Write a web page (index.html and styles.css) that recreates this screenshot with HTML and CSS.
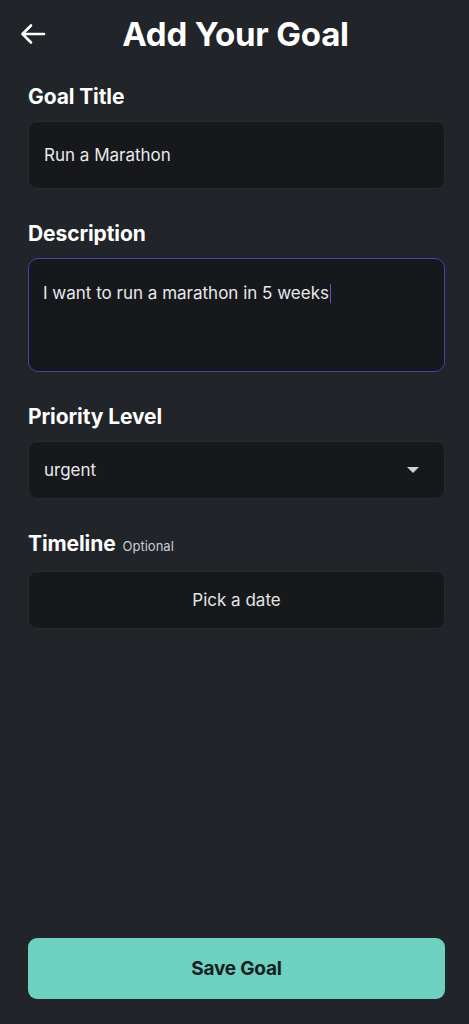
FILE: index.html
```html
<!DOCTYPE html>
<html lang="en">
<head>
<meta charset="utf-8">
<title>Add Your Goal</title>
<link rel="stylesheet" href="styles.css">
</head>
<body>
<div class="screen">
  <header class="header">
    <button class="back" aria-label="Back">
      <svg width="26" height="22" viewBox="0 0 26 22" fill="none" stroke="#ffffff" stroke-width="2.6" stroke-linecap="round" stroke-linejoin="round">
        <path d="M24 11H3"/>
        <path d="M11 2.5L2.5 11L11 19.5"/>
      </svg>
    </button>
    <h1 class="title">Add Your Goal</h1>
  </header>

  <section class="field field-first">
    <label class="label">Goal Title</label>
    <div class="input input-title">Run a Marathon</div>
  </section>

  <section class="field">
    <label class="label">Description</label>
    <div class="input textarea">I want to run a marathon in 5 weeks<span class="caret"></span></div>
  </section>

  <section class="field">
    <label class="label">Priority Level</label>
    <div class="input select">
      <span>urgent</span>
      <span class="tri"></span>
    </div>
  </section>

  <section class="field">
    <label class="label">Timeline <span class="optional">Optional</span></label>
    <div class="input date">Pick a date</div>
  </section>

  <button class="save">Save Goal</button>
</div>
</body>
</html>
```

FILE: styles.css
```css
* { box-sizing: border-box; }
html, body {
  margin: 0;
  padding: 0;
  background: #212428;
}
body {
  font-family: Inter, "Noto Sans", sans-serif;
  color: #ffffff;
}
.screen {
  min-height: 1024px;
  display: flex;
  flex-direction: column;
  padding: 0 24px 25px 28px;
}
.header {
  position: relative;
  height: 40px;
  margin-top: 14px;
  display: flex;
  align-items: center;
  justify-content: center;
}
.back {
  position: absolute;
  left: -8px;
  top: 9px;
  background: none;
  border: 0;
  padding: 0;
  display: flex;
}
.title {
  margin: 0 2px 0 0;
  font-size: 33px;
  font-weight: 700;
  line-height: 40px;
  letter-spacing: -0.2px;
}
.field {
  display: flex;
  flex-direction: column;
  margin-top: 32px;
}
.field-first { margin-top: 30px; }
.label {
  font-size: 21px;
  font-weight: 700;
  line-height: 25px;
  margin-bottom: 12px;
  letter-spacing: -0.1px;
  display: flex;
  align-items: baseline;
  gap: 7px;
}
.optional {
  font-size: 13px;
  font-weight: 400;
  color: #c9ccd1;
  letter-spacing: 0;
}
.input {
  background: #16181b;
  border: 1px solid #272a2f;
  border-radius: 9px;
  font-size: 17px;
  color: #e8e9eb;
  padding: 0 15px;
  display: flex;
  align-items: center;
}
.input-title { height: 68px; }
.textarea {
  height: 114px;
  align-items: flex-start;
  padding-top: 24px;
  border: 1.5px solid #4a3fb8;
  border-radius: 10px;
  padding-left: 14px;
}
.caret {
  display: inline-block;
  width: 1.5px;
  height: 19px;
  background: #5b4fd6;
  margin-left: 1px;
  margin-top: 1px;
}
.select {
  height: 58px;
  justify-content: space-between;
  padding-right: 25px;
}
.tri {
  width: 0;
  height: 0;
  border-left: 6px solid transparent;
  border-right: 6px solid transparent;
  border-top: 6px solid #d0d2d6;
}
.date {
  height: 58px;
  justify-content: center;
  color: #e3e4e6;
}
.save {
  margin-top: auto;
  height: 61px;
  border: 0;
  border-radius: 9px;
  background: #6dd0c1;
  color: #172020;
  font-family: Inter, "Noto Sans", sans-serif;
  font-size: 19px;
  font-weight: 700;
  letter-spacing: -0.2px;
}
```
